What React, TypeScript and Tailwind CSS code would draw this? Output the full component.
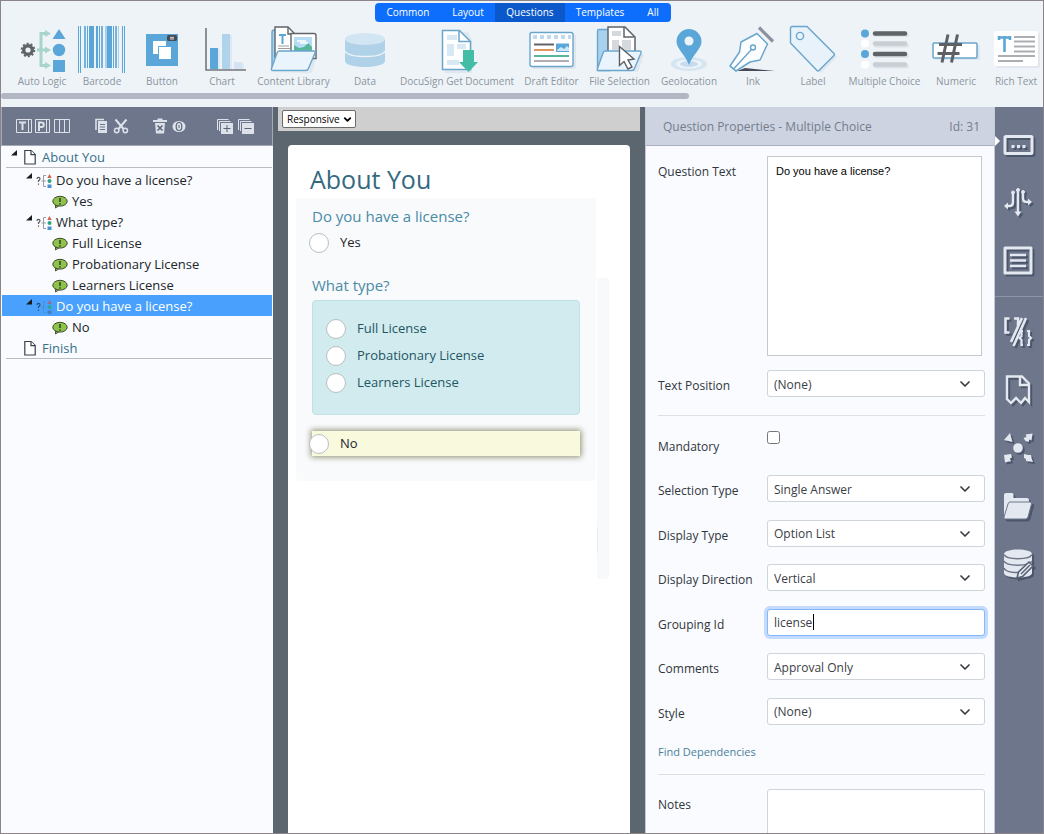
import React, { useState } from "react";
import type { ReactNode } from "react";
import { ChevronDown } from "lucide-react";

const BLUE = "#5ba6d8";
const EDGE = "#6aa5cc";

function Icon({ children }: { children: ReactNode }) {
  return (
    <svg viewBox="0 0 48 48" className="h-12 w-12" fill="none" aria-hidden="true">
      {children}
    </svg>
  );
}

const AutoLogic = () => (
  <Icon>
    <circle cx="10" cy="25" r="4.3" stroke="#606468" strokeWidth="3.4" />
    <circle cx="10" cy="25" r="6.4" stroke="#606468" strokeWidth="1.8" strokeDasharray="2 2" />
    <path d="M19 25h10M29 8.500h-6v32h6" stroke="#a8d5cb" strokeWidth="3" />
    <path d="M27 5l6 3.500-6 3.500zM27 21.500l6 3.500-6 3.500zM27 37l6 3.500-6 3.500z" fill="#a8d5cb" />
    <path d="M41 4l6.500 10h-13z" fill={BLUE} />
    <circle cx="41" cy="25" r="6.200" fill={BLUE} />
    <path d="M35 35h12v12H35z" fill={BLUE} />
  </Icon>
);

const BARS: [number, number, number, string][] = [
  [0, 1, 47, BLUE], [2, 1, 47, BLUE], [6, 2, 42, "#78b2dc"], [9, 1, 42, BLUE], [11, 5, 42, BLUE],
  [18, 2, 42, BLUE], [21, 1, 42, BLUE], [23, 2, 42, "#78b2dc"], [27, 2, 42, "#a9cfe9"], [29, 5, 42, BLUE],
  [35, 1, 42, BLUE], [37, 2, 42, "#78b2dc"], [40, 1, 42, "#a9cfe9"], [44, 1, 47, BLUE], [46, 1, 47, BLUE],
];

const Barcode = () => (
  <Icon>
    {BARS.map(([x, w, h, c]) => (
      <rect key={x} x={x} y="1" width={w} height={h} fill={c} />
    ))}
  </Icon>
);

const ButtonIcon = () => (
  <Icon>
    <path d="M8 9h32v32H8z" fill={BLUE} />
    <path d="M15 16h13v13H15z" fill="#fff" />
    <path d="M20.500 21.500h13v13h-13z" fill="#fff" stroke={BLUE} />
    <rect x="29" y="10" width="10" height="6" rx="1.500" fill="#454b52" />
    <path d="M33 11.500v3M35 11.500v3M32 12.500h4M32 14h4" stroke="#ddd" strokeWidth=".7" />
  </Icon>
);

const Chart = () => (
  <Icon>
    <path d="M14 24h8v21h-8zM26 10h8v35h-8zM38 38h8v7h-8z" fill="#dfe9f3" />
    <path d="M12 23h8v21h-8z" fill={BLUE} />
    <path d="M24 9h8v35h-8z" fill="#afd3ea" />
    <path d="M36 37h8v7h-8z" fill="#d4e4f2" />
    <path d="M8 3v42h40" stroke="#74777c" strokeWidth="1.600" />
  </Icon>
);

const FolderFront = () => (
  <path d="M9.500 26q-2 0-2.500 2L1.500 43.500q-.5 2 1.500 2h33q2 0 2.500-2L45 28q.5-2-1.500-2z" fill="#eaf4fc" stroke={EDGE} strokeWidth="1.400" />
);

const ContentLibrary = () => (
  <Icon>
    <path d="M6 47h33l6-19 2 1-5 18-3 1z" fill="#dfe7ef" />
    <path d="M4 5h12v39H2V7q0-2 2-2z" fill="#a8d2ee" stroke={EDGE} strokeWidth="1.400" />
    <path d="M5 2h13l7 7v23H5z" fill="#fff" stroke="#606468" strokeWidth="1.400" />
    <path d="M18 2v7h7" stroke="#606468" strokeWidth="1.400" />
    <path d="M9 10h7M12.500 10v9" stroke={BLUE} strokeWidth="2" />
    <path d="M8 21h11M8 23.500h12" stroke="#9b9fa3" />
    <path d="M21 8.500h23q2 0 2 2v23H21z" fill="#fff" stroke="#606468" strokeWidth="1.400" />
    <path d="M24 12h18v14H24z" fill="#b6ddf5" />
    <path d="M24 20l5 3 5-1 4-4 4 4v4H24z" fill="#56b79c" />
    <path d="M27 16h9M30 18h8" stroke="#fff" strokeWidth="1.500" />
    <FolderFront />
  </Icon>
);

const Data = () => (
  <Icon>
    <path d="M4 14v22c0 3.500 9 6 20 6s20-2.500 20-6V14z" fill="#afd2e9" />
    <ellipse cx="24" cy="14" rx="20" ry="6" fill="#d2e5f3" />
    <path d="M4 26c2 4 10 5.500 20 5.500S42 30 44 26" stroke="#eef3f7" strokeWidth="1.400" />
  </Icon>
);

const DocuSign = () => (
  <Icon>
    <path d="M12 7h23l4 8v33H12z" fill="#e0e8ef" />
    <path d="M9.500 5.500h17l11 11v28h-28z" fill="#fff" stroke={EDGE} strokeWidth="1.500" />
    <path d="M26 5.500v11h11" stroke={EDGE} strokeWidth="1.500" />
    <path d="M14 10h10v5H14zM14 19h7v12h-7zM24 19h9v5h-9zM14 35h12v5H14z" fill="#d9e8f5" />
    <path d="M30 25h11v12h4l-9.500 10L26 37h4z" fill="#43bda6" />
  </Icon>
);

const DraftEditor = () => (
  <Icon>
    <rect x="4" y="9" width="44" height="35" rx="2" fill="#e0e6ec" />
    <rect x="2" y="7.500" width="43" height="34" rx="2" fill="#fff" stroke={EDGE} strokeWidth="1.400" />
    <path d="M5 12h38" stroke="#c0d9ed" strokeWidth="4" strokeDasharray="4 3" />
    <path d="M6 19.500h20" stroke="#606468" strokeWidth="2" />
    <path d="M6 25h20" stroke="#e0955f" strokeWidth="2" />
    <path d="M28 18.500h13v8.500H28z" fill={BLUE} />
    <path d="M29 25l4-3 3 2 3-3 2 2v3H29z" fill="#cfe7f6" />
    <path d="M6 31h35" stroke="#56b79c" strokeWidth="2" />
    <path d="M6 36h35" stroke="#b0adb2" strokeWidth="2" />
  </Icon>
);

const FileSelection = () => (
  <Icon>
    <path d="M5 47h33l7-18 3 0-6 18z" fill="#dfe7ef" />
    <path d="M3 4.500h11v41H1.500V6q0-1.500 1.500-1.500z" fill="#a8d2ee" stroke={EDGE} strokeWidth="1.400" />
    <path d="M12 2h17l10 10v18H12z" fill="#fff" stroke="#606468" strokeWidth="1.500" />
    <path d="M28 2v10h10" stroke="#606468" strokeWidth="1.500" />
    <path d="M16 6h9v5h-9zM16 15h7v10h-7zM26 15h9v10h-9z" fill="#d5d9de" />
    <FolderFront />
    <path d="M23.500 21.500v19l4.500-4 4 7.500 4-2-4-7 6-1z" fill="#fff" stroke="#5a5e63" strokeWidth="1.400" />
  </Icon>
);

const Geolocation = () => (
  <Icon>
    <ellipse cx="24" cy="39" rx="18" ry="7" fill="#d5e5f2" />
    <ellipse cx="24" cy="39" rx="13" ry="4.500" fill="#eef3f7" />
    <ellipse cx="24" cy="39" rx="9" ry="3" fill="#c6dcee" />
    <path d="M24 40C20 29 11.500 24 11.500 16.500a12.500 12.500 0 0125 0C36.500 24 28 29 24 40z" fill={BLUE} />
    <circle cx="24" cy="16" r="4.500" fill="#eef3f7" />
  </Icon>
);

const Ink = () => (
  <Icon>
    <path d="M8 46l38 0-30-3z" fill="#454b58" />
    <path d="M1 41L10.500 27l1.500-10L28 8.500 38.500 19 31 35l-10 2L7 46z" fill="#fbfdff" stroke={EDGE} strokeWidth="1.500" strokeLinejoin="round" />
    <circle cx="24" cy="22.500" r="2.500" stroke={EDGE} strokeWidth="1.400" />
    <path d="M22.500 24.500L4.500 44M1 41l6 5" stroke={EDGE} strokeWidth="1.400" />
    <path d="M30 2.500l14 14" stroke="#8a939f" strokeWidth="3.200" />
  </Icon>
);

const LabelIcon = () => (
  <Icon>
    <path d="M3 18L5 4h15l28 28-16 16z" fill="#dfe7ef" />
    <path d="M1.500 3q0-1.500 1.500-1.500h15L45 28.500q1 1 0 2L30 45.500q-1 1-2 0L1.500 18z" fill="#e8f2fb" stroke={EDGE} strokeWidth="1.400" />
    <circle cx="11" cy="11" r="3.600" stroke={EDGE} strokeWidth="1.400" />
  </Icon>
);

const MultipleChoice = () => (
  <Icon>
    <path d="M15 10h31M15 20.500h31M15 31h31M15 41.500h31" stroke="#dde3e9" strokeWidth="4" strokeLinecap="round" />
    <path d="M14 8.500h30M14 29h30" stroke="#606468" strokeWidth="4.600" strokeLinecap="round" />
    <path d="M14 18.500h30M14 39.500h30" stroke="#c9ced4" strokeWidth="4.600" strokeLinecap="round" />
    <circle cx="4" cy="8.500" r="4" fill={BLUE} />
    <circle cx="4" cy="18.500" r="4" fill="#fff" />
    <circle cx="4" cy="29" r="4" fill={BLUE} />
    <circle cx="4" cy="39.500" r="4" fill="#fff" />
  </Icon>
);

const Numeric = () => (
  <Icon>
    <path d="M3 20h45v15H3z" fill="#dfe7ef" />
    <rect x="1" y="18" width="44" height="15" rx="1" fill="#fff" stroke={EDGE} strokeWidth="1.500" />
    <path d="M16 9.500l-6 28M25.500 9.500l-6 28M7 19.500h23M5.500 28.500h22" stroke="#5d6165" strokeWidth="3" />
  </Icon>
);

const RichText = () => (
  <Icon>
    <rect x="4" y="8" width="44" height="35" rx="2" fill="#e2e7ed" />
    <rect x="2" y="6" width="44" height="35" rx="2" fill="#fff" />
    <path d="M6 12.500h13M12.500 11v16M7 11v4M18 11v4" stroke={BLUE} strokeWidth="2.600" />
    <path d="M22 12h21M22 16.500h21M22 21.500h21M22 26.500h21M6 31h37M6 36h25" stroke="#abaeb2" strokeWidth="2" />
  </Icon>
);

const TOOLS = [
  { name: "Auto Logic", icon: <AutoLogic />, width: "w-[60px]" },
  { name: "Barcode", icon: <Barcode />, width: "w-[60px]" },
  { name: "Button", icon: <ButtonIcon />, width: "w-[60px]" },
  { name: "Chart", icon: <Chart />, width: "w-[60px]" },
  { name: "Content Library", icon: <ContentLibrary />, width: "w-[83px]" },
  { name: "Data", icon: <Data />, width: "w-[60px]" },
  { name: "DocuSign Get Document", icon: <DocuSign />, width: "w-[124px]" },
  { name: "Draft Editor", icon: <DraftEditor />, width: "w-[65px]" },
  { name: "File Selection", icon: <FileSelection />, width: "w-[71px]" },
  { name: "Geolocation", icon: <Geolocation />, width: "w-[68px]" },
  { name: "Ink", icon: <Ink />, width: "w-[60px]" },
  { name: "Label", icon: <LabelIcon />, width: "w-[60px]" },
  { name: "Multiple Choice", icon: <MultipleChoice />, width: "w-[83px]" },
  { name: "Numeric", icon: <Numeric />, width: "w-[60px]" },
  { name: "Rich Text", icon: <RichText />, width: "w-[60px]" },
];

const TABS = [
  { name: "Common", width: "w-[66px]" },
  { name: "Layout", width: "w-[54px]" },
  { name: "Questions", width: "w-[70px]" },
  { name: "Templates", width: "w-[70px]" },
  { name: "All", width: "w-[36px]" },
];

function Header() {
  return (
    <header className="h-[106px] shrink-0 overflow-hidden bg-[#eef3f7]">
      <nav className="mt-[2px] flex justify-center" aria-label="Tool groups">
        <div className="ml-[2px] flex overflow-hidden rounded bg-[#0d6efd]">
          {TABS.map((t) => (
            <button
              key={t.name}
              type="button"
              className={`${t.width} h-[19px] text-[10px] leading-[19px] font-medium text-white ${t.name === "Questions" ? "bg-[#0a58ca]" : ""}`}
            >
              {t.name}
            </button>
          ))}
        </div>
      </nav>
      <div className="mt-[3px] flex pl-[11px]">
        {TOOLS.map((t) => (
          <button key={t.name} type="button" className={`${t.width} flex shrink-0 flex-col items-center`}>
            {t.icon}
            <span className="mt-px text-[10px] leading-[14px] font-medium whitespace-nowrap text-[#8b95a1]">{t.name}</span>
          </button>
        ))}
      </div>
      <div className="mt-[5px] h-[6px] w-[66%] rounded-full bg-[#b0b7c2]" />
    </header>
  );
}

function Glyph({ label, children }: { label: string; children: ReactNode }) {
  return (
    <button type="button" aria-label={label} className="h-4 w-4">
      <svg viewBox="0 0 16 16" className="h-4 w-4" fill="none" stroke="#dde1ea" strokeWidth="1">
        {children}
      </svg>
    </button>
  );
}

function TreeToolbar() {
  return (
    <div className="flex h-[39px] shrink-0 items-center border-x border-b border-[#a4a9b8] bg-[#6e768b] pl-[14px]">
      <div className="flex gap-[3px]">
        <Glyph label="Text column">
          <path d="M.5 1.500h15v13H.5zM12.500 1.500v13" />
          <path d="M3 4.500h7M6.500 4.500v7.500" strokeWidth="2" />
        </Glyph>
        <Glyph label="Page column">
          <path d="M.5 1.500h14v13H.5zM11.500 1.500v13" />
          <path d="M4 13V4.500h2.500a2 2 0 010 4.500H4" strokeWidth="2" />
        </Glyph>
        <Glyph label="Columns">
          <path d="M.5 1.500h15v13H.5zM5.500 1.500v13M10.500 1.500v13" />
        </Glyph>
      </div>
      <div className="ml-[24px] flex gap-[3px]">
        <Glyph label="Copy">
          <path d="M2 12V1.500h8" strokeWidth="1.600" />
          <path d="M4 3h9v12H4z" fill="#dde1ea" stroke="none" />
          <path d="M6 6.500h5M6 9h5M6 11.500h5" stroke="#6e768b" />
        </Glyph>
        <Glyph label="Cut">
          <path d="M2.500 1.500l8.500 10M13.500 1.500L5 11.500" strokeWidth="2" />
          <circle cx="3.700" cy="12.500" r="2.200" strokeWidth="1.500" />
          <circle cx="12.300" cy="12.500" r="2.200" strokeWidth="1.500" />
        </Glyph>
      </div>
      <div className="ml-[23px] flex gap-[3px]">
        <Glyph label="Delete">
          <path d="M1 3h14M5.500 1.500h5" strokeWidth="2" />
          <path d="M3 5h10l-1 10.500H4z" fill="#dde1ea" stroke="none" />
          <path d="M5.500 7.500l5 5M10.500 7.500l-5 5" stroke="#5c6478" strokeWidth="1.500" />
        </Glyph>
        <Glyph label="Visibility">
          <ellipse cx="8" cy="8.500" rx="6.500" ry="5.500" fill="#dde1ea" stroke="none" />
          <ellipse cx="8" cy="8.500" rx="2.800" ry="4" stroke="#5c6478" strokeWidth="1.200" />
          <path d="M8 7v3" stroke="#5c6478" />
        </Glyph>
      </div>
      <div className="ml-[30px] flex gap-[5px]">
        <Glyph label="Expand all">
          <path d="M.5 12V1.500h11M2.500 13V3.500h11" />
          <path d="M4 5h12v11H4z" fill="#dde1ea" stroke="none" />
          <path d="M6.500 10.500h7M10 7v7" stroke="#5c6478" />
        </Glyph>
        <Glyph label="Collapse all">
          <path d="M.5 12V1.500h11M2.500 13V3.500h11" />
          <path d="M4 5h12v11H4z" fill="#dde1ea" stroke="none" />
          <path d="M6.500 10.500h7" stroke="#5c6478" />
        </Glyph>
      </div>
    </div>
  );
}

const Caret = () => (
  <svg viewBox="0 0 6 6" className="mb-[8px] h-[6px] w-[6px] shrink-0" aria-hidden="true">
    <path d="M6 0v5.500H0z" fill="#1b1b1b" />
  </svg>
);

const PageIcon = () => (
  <svg viewBox="0 0 12 16" className="mt-px h-4 w-3 shrink-0" fill="#fff" stroke="#38404a" strokeWidth="1.200" aria-hidden="true">
    <path d="M.8 1.500h6.400l4 4v9.500H.8z" />
    <path d="M7 1.500v4.200h4.200" />
  </svg>
);

const QuestionIcon = ({ dim }: { dim?: boolean }) => (
  <svg viewBox="0 0 16 16" className="mt-[2px] h-4 w-4 shrink-0" fill="none" aria-hidden="true">
    <path d="M1 6q0-1.700 1.500-1.700T4 5.800q0 1.200-1.500 2V9M2.500 10.500v1.200" stroke={dim ? "#23507e" : "#555"} strokeWidth="1.200" />
    <path d="M10 2.500H7.500v11H10M5.500 8H10" stroke={dim ? "#4a8fd4" : "#9a9a9a"} />
    <path d="M13.500 1l2.200 4h-4.400z" fill={dim ? "#9a6a8a" : "#d3604e"} />
    <circle cx="13.500" cy="8" r="2" fill={dim ? "#2ba893" : "#2ba37c"} />
    <path d="M11.500 11.500h4V15h-4z" fill={dim ? "#3f7fc4" : "#4a8fd0"} />
  </svg>
);

const AnswerIcon = () => (
  <svg viewBox="0 0 16 14" className="mt-[2px] h-[14px] w-4 shrink-0" aria-hidden="true">
    <path d="M3.500 10l0 3 3-2z" fill="#8fc24c" stroke="#3d4a2a" strokeWidth=".9" />
    <ellipse cx="8" cy="6.200" rx="7.200" ry="4.900" fill="#8fc24c" stroke="#3d4a2a" strokeWidth="1" />
    <path d="M8 3v4M8 8.300v1.400" stroke="#20301a" strokeWidth="1.300" />
  </svg>
);

function PageRow({ label, open }: { label: string; open?: boolean }) {
  return (
    <li className={`ml-1 flex h-[22px] items-center border-b border-[#b9bdc2] ${open ? "mb-px pl-[5px]" : "pl-[18px]"}`}>
      {open && <Caret />}
      <span className={open ? "ml-[7px] flex" : "flex"}><PageIcon /></span>
      <span className="ml-[6px] text-[#35708a]">{label}</span>
    </li>
  );
}

function QuestionRow({ label, selected }: { label: string; selected?: boolean }) {
  return (
    <li className={`flex h-[21px] items-center pl-[24px] ${selected ? "bg-[#49a1fd] text-white" : ""}`}>
      <Caret />
      <span className="ml-[4px] flex"><QuestionIcon dim={selected} /></span>
      <span className="ml-[4px]">{label}</span>
    </li>
  );
}

function AnswerRow({ label }: { label: string }) {
  return (
    <li className="flex h-[21px] items-center pl-[50px]">
      <AnswerIcon />
      <span className="ml-[4px]">{label}</span>
    </li>
  );
}

function TreePanel() {
  return (
    <aside className="flex w-[272px] shrink-0 flex-col bg-[#f9fbfe]">
      <TreeToolbar />
      <ul className="px-px text-[13px] leading-[20px] text-[#212529]">
        <PageRow label="About You" open />
        <QuestionRow label="Do you have a license?" />
        <AnswerRow label="Yes" />
        <QuestionRow label="What type?" />
        <AnswerRow label="Full License" />
        <AnswerRow label="Probationary License" />
        <AnswerRow label="Learners License" />
        <QuestionRow label="Do you have a license?" selected />
        <AnswerRow label="No" />
        <PageRow label="Finish" />
      </ul>
    </aside>
  );
}

function Radio({ name, label, className }: { name: string; label: string; className: string }) {
  return (
    <label className={`flex h-[27px] items-center text-[13px] ${className}`}>
      <input type="radio" name={name} className="h-5 w-5 shrink-0 appearance-none rounded-full border border-[#b9bdc1] bg-white checked:border-[6px] checked:border-[#0d6efd]" />
      <span className="ml-[11px]">{label}</span>
    </label>
  );
}

function Preview() {
  return (
    <main className="flex min-w-0 flex-1 flex-col bg-[#5c666e] px-[5px]">
      <div className="h-[24px] shrink-0 bg-[#cfcfcf] pt-[3px] pl-1">
        <div className="relative w-[74px]">
          <select aria-label="Preview size" className="block h-[18px] w-full appearance-none rounded-[2px] border border-[#6b6b6b] bg-white pl-1 text-[10px] leading-[14px] text-black">
            <option>Responsive</option>
          </select>
          <ChevronDown className="pointer-events-none absolute top-[4px] right-[3px] h-[11px] w-[11px] text-black" strokeWidth={4} />
        </div>
      </div>
      <section className="mx-[10px] mt-[14px] flex flex-1 flex-col rounded-t bg-white px-2 pt-[15px]">
        <h1 className="pl-[14px] text-[25px] leading-[38px] text-[#34697f]">About You</h1>
        <div className="flex gap-px">
          <div className="h-[283px] min-w-0 flex-1 rounded-b bg-[#f8fafc] px-4 pt-[7px]">
            <h2 className="text-[15px] leading-[22px] text-[#4a8ba6]">Do you have a license?</h2>
            <Radio name="license" label="Yes" className="-ml-[3px] mt-[2px] text-[#212529]" />
            <h2 className="mt-[18px] text-[15px] leading-[22px] text-[#4a8ba6]">What type?</h2>
            <div className="mt-[4px] h-[115px] rounded border border-[#bfe1e6] bg-[#d1ebef] pt-[14px] pl-[13px] text-[#1f5663]">
              <Radio name="type" label="Full License" className="" />
              <Radio name="type" label="Probationary License" className="" />
              <Radio name="type" label="Learners License" className="" />
            </div>
            <div className="mt-[16px] flex h-[25px] items-center bg-[#f9f9de] shadow-[0_0_6px_1px_#8c8c6c]">
              <Radio name="license" label="No" className="-ml-[3px] text-[#212529]" />
            </div>
          </div>
          <div className="mt-[80px] mr-[13px] h-[301px] w-[12px] rounded-br bg-[#f8f9fb] pt-[249px]">
            <div className="h-[26px] w-px bg-[#eeeded]" />
          </div>
        </div>
      </section>
    </main>
  );
}

function Field({ id, label, children }: { id: string; label: string; children: ReactNode }) {
  return (
    <div className="flex items-start">
      <label htmlFor={id} className="w-[109px] shrink-0 pt-[6px] text-[12px] leading-[20px] font-medium whitespace-nowrap text-[#30363c]">
        {label}
      </label>
      <div className="relative min-w-0 flex-1">{children}</div>
    </div>
  );
}

function SelectField({ id, label, value }: { id: string; label: string; value: string }) {
  return (
    <Field id={id} label={label}>
      <select id={id} className="block h-[27px] w-full appearance-none rounded-[3px] border border-[#ced4da] bg-white pt-[2px] pl-[6px] text-[12px] leading-[20px] text-[#3a4046]">
        <option>{value}</option>
      </select>
      <ChevronDown className="pointer-events-none absolute top-[6px] right-[12px] h-4 w-4 text-[#343a40]" strokeWidth={2.5} />
    </Field>
  );
}

function Properties() {
  const [group, setGroup] = useState("license");
  return (
    <section className="flex w-[350px] shrink-0 flex-col overflow-hidden border-x border-[#c3c9d6] bg-[#f9fbfe]">
      <header className="flex h-[39px] shrink-0 items-center justify-between border-b border-[#aab0c0] bg-[#cdd3e0] pt-[2px] pr-[14px] pl-[17px] text-[12px] font-medium text-[#737d8e]">
        <span>Question Properties - Multiple Choice</span>
        <span>Id: 31</span>
      </header>
      <form className="flex flex-col pt-[10px] pr-[9px] pl-[12px]">
        <Field id="question" label="Question Text">
          <textarea id="question" defaultValue="Do you have a license?" className="mr-[3px] block h-[200px] w-[calc(100%-3px)] resize-none border border-[#c4c9ce] bg-white px-[8px] pt-[7px] font-['Liberation_Sans',sans-serif] text-[11px] leading-[14px] text-black" />
        </Field>
        <div className="mt-[14px]">
          <SelectField id="position" label="Text Position" value="(None)" />
        </div>
        <hr className="mt-[18px] border-[#dcdfe3]" />
        <div className="mt-[15px] h-[44px]">
          <Field id="mandatory" label="Mandatory">
            <input id="mandatory" type="checkbox" className="mt-0 block h-[13px] w-[13px]" />
          </Field>
        </div>
        <div className="flex h-[250px] flex-col justify-between">
          <SelectField id="selection" label="Selection Type" value="Single Answer" />
          <SelectField id="display" label="Display Type" value="Option List" />
          <SelectField id="direction" label="Display Direction" value="Vertical" />
          <Field id="grouping" label="Grouping Id">
            <input
              id="grouping"
              type="text"
              value={group}
              onChange={(e) => setGroup(e.target.value)}
              className="block h-[27px] w-full rounded-[3px] border border-[#86b7fe] bg-white pl-[6px] text-[12px] leading-[20px] text-[#3a4046] shadow-[0_0_0_3px_#c2dbfe] outline-none"
            />
            <span className="absolute top-[5px] left-[46px] h-[16px] w-px bg-black" />
          </Field>
          <SelectField id="comments" label="Comments" value="Approval Only" />
          <SelectField id="style" label="Style" value="(None)" />
        </div>
        <a href="#dependencies" className="mt-[17px] text-[11px] leading-[20px] text-[#4a7f9c]">Find Dependencies</a>
        <hr className="mt-[12px] border-[#dcdfe3]" />
        <div className="mt-[14px]">
          <Field id="notes" label="Notes">
            <textarea id="notes" className="block h-[80px] w-full resize-none rounded-[3px] border border-[#ced4da] bg-white" />
          </Field>
        </div>
      </form>
    </section>
  );
}

function RailButton({ label, children }: { label: string; children: ReactNode }) {
  return (
    <button type="button" aria-label={label} className="flex h-[58px] w-full items-center justify-center">
      <svg viewBox="0 0 32 32" className="h-8 w-8 drop-shadow-[2px_2px_0_#4b566b]" fill="none" stroke="#e4e8f0" strokeWidth="2.400">
        {children}
      </svg>
    </button>
  );
}

function Rail() {
  return (
    <nav aria-label="Panels" className="relative flex w-[48px] shrink-0 flex-col bg-[#6e768b] pt-[9px]">
      <span className="absolute top-[29px] left-0 h-0 w-0 border-y-[5px] border-l-[5px] border-y-transparent border-l-white" />
      <RailButton label="Properties">
        <rect x="2" y="7.500" width="27" height="17" rx="1" strokeWidth="3" />
        <path d="M8.500 17.500h3M14 17.500h3M19.500 17.500h3" strokeWidth="3" />
      </RailButton>
      <RailButton label="Flow">
        <path d="M15 3v23M10 6v9q0 4-3 4H4M20 5v6q0 4 3 4h3" strokeWidth="2.400" />
        <path d="M11.500 24.500l3.500 5 3.500-5zM5 15.500L1 19l4 3.500zM25 11.500l4 3.500-4 3.500z" fill="#e4e8f0" stroke="none" />
        <path d="M8.500 5.500a1.500 1.500 0 103 0 1.500 1.500 0 10-3 0M18.500 5a1.500 1.500 0 103 0 1.500 1.500 0 10-3 0M13.500 3a1.500 1.500 0 103 0 1.500 1.500 0 10-3 0" fill="#e4e8f0" strokeWidth="1" />
      </RailButton>
      <RailButton label="List">
        <path d="M2 3h26v25H2z" strokeWidth="3" strokeLinejoin="round" />
        <path d="M7 10h16M7 15.500h16M7 21h16" strokeWidth="2.600" />
      </RailButton>
      <hr className="my-[6px] border-[#8d94a6]" />
      <RailButton label="Expressions">
        <path d="M6.500 2.500H2.500v14H6.500M11 2.500h4v8M23 2L10.500 30M19 2L8 26" strokeWidth="2.600" />
        <path d="M20 15h-1.500v5l-2 2 2 2v5H20M24 15h2v5l2 2-2 2v5h-2" strokeWidth="2.200" />
      </RailButton>
      <RailButton label="Document">
        <path d="M4 2.500h15l7 7V28l-4-4-4 5-5-5-5 5-4-4z" />
        <path d="M17 3v8h8" />
      </RailButton>
      <RailButton label="Connections">
        <circle cx="15" cy="16" r="4.800" fill="#e4e8f0" stroke="none" />
        <path d="M7 1l2.500 9L1 8zM29.500 1.500l-1 7-2-1-1 2.500-3-1-2-3 3-1-1-2.500zM1 23l7-1 1 3.500-2 1 1 3-2 0-4 1zM21 22l4 1 3 0 .5 3 1.500 4-7-1 0-2-2-1z" fill="#e4e8f0" stroke="none" />
      </RailButton>
      <RailButton label="Files">
        <path d="M1 26V5q0-2 2-2h6q1.500 0 1.500 2v3H24q2 0 2 3v3H7L3 26z" fill="#e4e8f0" stroke="none" />
        <path d="M7 12h20q2 0 1.500 2l-3.500 13q-.5 2-2.500 2H2.500q-2 0-1.500-2l4-13q.5-2 2-2z" fill="#e4e8f0" stroke="#6e768b" strokeWidth="1" />
      </RailButton>
      <RailButton label="Data">
        <path d="M1 6c0-6 28-6 28 0v19c0 6-28 6-28 0z" fill="#e4e8f0" stroke="none" />
        <path d="M1 6.500c2 5.500 26 5.500 28 0M1 13c2 5.500 26 5.500 28 0M1 20c2 5 14 5 17 4" stroke="#6e768b" strokeWidth="1.500" />
        <path d="M14 30l1.500-6L26 14l4 4-10.500 10.500z" fill="#e4e8f0" stroke="#566076" strokeWidth="1.600" />
        <path d="M18 26l9-9" stroke="#566076" strokeWidth="1.400" />
      </RailButton>
    </nav>
  );
}

export default function App() {
  return (
    <div className="flex h-screen flex-col overflow-hidden border border-[#8b8488] bg-[#eef3f7] font-['Open_Sans','Noto_Sans',sans-serif]">
      <Header />
      <div className="flex min-h-0 flex-1">
        <TreePanel />
        <Preview />
        <Properties />
        <Rail />
      </div>
    </div>
  );
}
